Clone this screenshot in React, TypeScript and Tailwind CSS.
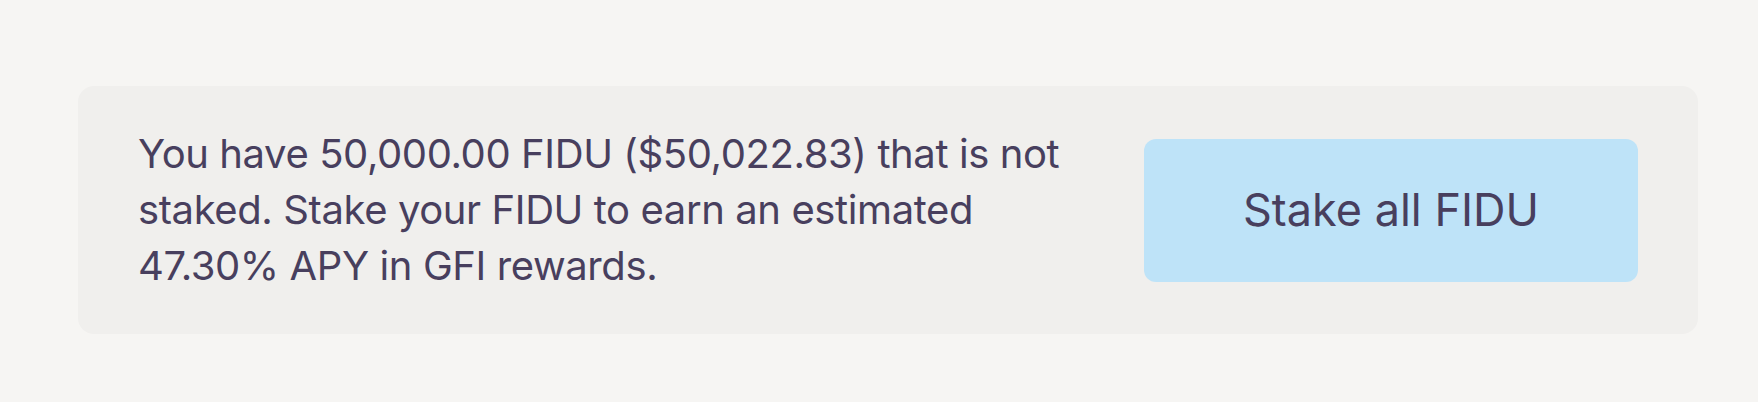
export default function App() {
  return (
    <div className="min-h-[402px] w-full bg-[#f6f5f3] pl-[78px] pr-[60px] pt-[86px] pb-[68px] font-['Inter',sans-serif] text-[#483f5e]">
      <div className="flex items-center gap-[56px] rounded-2xl bg-[#f0efed] px-[60px] py-[40px]">
        <p className="flex-1 text-[40px] leading-[56px] tracking-[-0.01em]">
          You have 50,000.00 FIDU ($50,022.83) that is not staked. Stake your FIDU to earn an estimated 47.30% APY in GFI rewards.
        </p>
        <button className="h-[143px] w-[494px] shrink-0 rounded-xl bg-[#bee3f8] text-[45px]">
          Stake all FIDU
        </button>
      </div>
    </div>
  );
}
